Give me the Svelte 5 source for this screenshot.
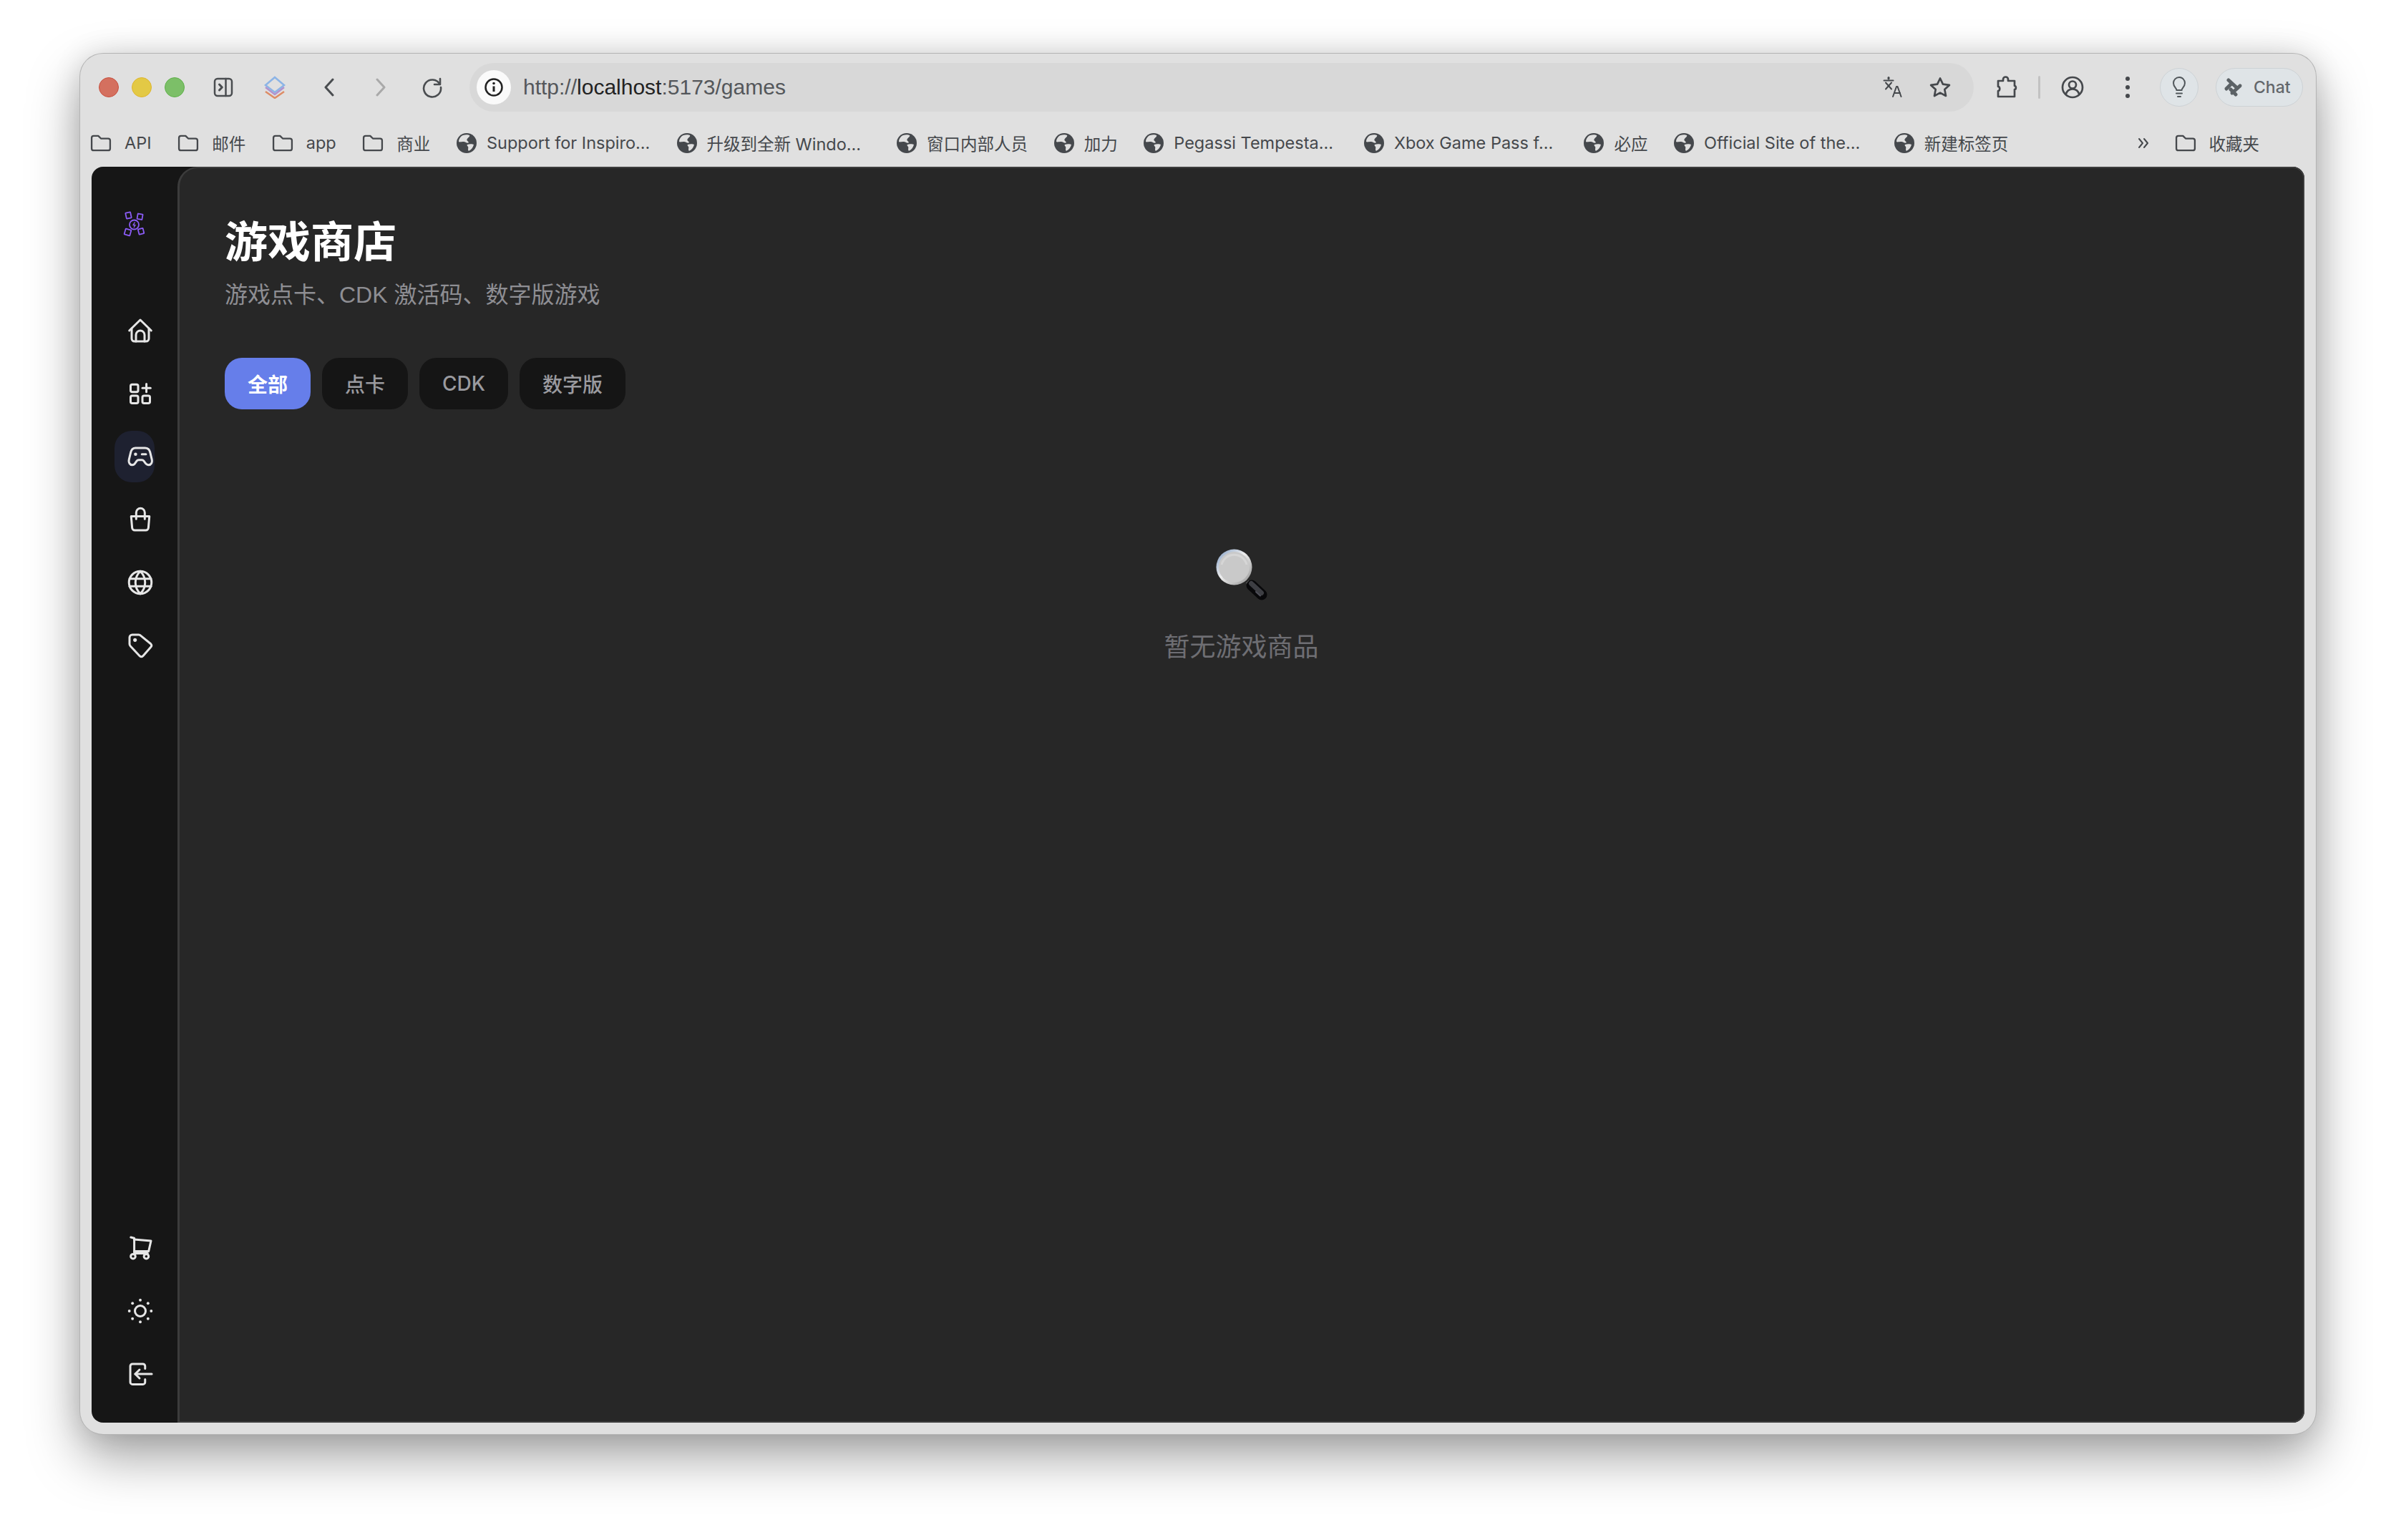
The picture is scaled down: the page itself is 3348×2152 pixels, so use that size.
<script>
  const bookmarks = [
    { label: 'API', icon: 'folder' },
    { label: '邮件', icon: 'folder' },
    { label: 'app', icon: 'folder' },
    { label: '商业', icon: 'folder' },
    { label: 'Support for Inspiro...', icon: 'globe', long: true },
    { label: '升级到全新 Windo...', icon: 'globe', long: true },
    { label: '窗口内部人员', icon: 'globe' },
    { label: '加力', icon: 'globe' },
    { label: 'Pegassi Tempesta...', icon: 'globe', long: true },
    { label: 'Xbox Game Pass f...', icon: 'globe', long: true },
    { label: '必应', icon: 'globe' },
    { label: 'Official Site of the...', icon: 'globe', long: true },
    { label: '新建标签页', icon: 'globe' }
  ];

  const tabs = ['全部', '点卡', 'CDK', '数字版'];

  const navTop = [
    { name: 'home', paths: ['M1.8 12 12 2l10.2 10', 'M4 10v9.5A2.5 2.5 0 0 0 6.500 22h11a2.500 2.500 0 0 0 2.500-2.500V10', 'M8 22v-6a4 4 0 0 1 8 0v6'] },
    { name: 'apps', paths: ['M4.500 3.500h4a1.500 1.500 0 0 1 1.500 1.500v4a1.500 1.500 0 0 1-1.500 1.500h-4A1.500 1.500 0 0 1 3 9V5a1.500 1.500 0 0 1 1.500-1.500Z', 'M4.500 14h4a1.500 1.500 0 0 1 1.500 1.500v4a1.500 1.500 0 0 1-1.500 1.500h-4A1.500 1.500 0 0 1 3 19.500v-4A1.500 1.500 0 0 1 4.500 14Z', 'M15.500 14h4a1.500 1.500 0 0 1 1.500 1.500v4a1.500 1.500 0 0 1-1.500 1.500h-4a1.500 1.500 0 0 1-1.500-1.500v-4a1.500 1.500 0 0 1 1.500-1.500Z', 'M17.700 3v7.500', 'M14 6.800h7.500'] },
    { name: 'games', active: true, paths: ['M7.500 4h9c2.400 0 4 1.400 4.600 3.800l1.700 7c.6 2.900-.9 5-3 5-1.300 0-2.300-.7-3.200-1.900l-1.300-1.800c-.5-.7-1-1-1.800-1h-3c-.8 0-1.300.3-1.800 1l-1.300 1.800C6.800 19.100 5.800 19.800 4.500 19.800c-2.100 0-3.600-2.100-3-5l1.700-7C3.800 5.400 5.100 4 7.500 4Z', 'M13.500 9.800h3.800'] , dots: [[7.600, 9.800, 1.500]] },
    { name: 'bag', paths: ['M3.500 9h17l-.9 10.500a2.500 2.500 0 0 1-2.500 2.500H6.900a2.500 2.500 0 0 1-2.500-2.500Z', 'M8.200 11.500V5.500a4 4 0 0 1 8 0v6'] },
    { name: 'globe', paths: ['M12 1.500a10.500 10.500 0 1 0 0 21 10.500 10.500 0 0 0 0-21Z', 'M12 1.500c-6 6-6 15 0 21', 'M12 1.500c6 6 6 15 0 21', 'M2 8.500h20', 'M2 15.500h20'] },
    { name: 'tag', paths: ['M2 4.500A2.500 2.500 0 0 1 4.500 2h6a3 3 0 0 1 2 .9l9.300 7.600a2.200 2.200 0 0 1 0 3l-7.300 8.300a2.200 2.200 0 0 1-3 0l-8.600-9.100a3 3 0 0 1-.9-2Z'], dots: [[7.100, 6.900, 1.700]] }
  ];

  const sunDots = [0, 45, 90, 135, 180, 225, 270, 315].map((deg) => {
    const r = (deg * Math.PI) / 180;
    return [12 + Math.cos(r) * 10.2, 12 + Math.sin(r) * 10.2, 1.300];
  });

  const navBottom = [
    { name: 'cart', paths: ['M3.200 2 6.400 2.800V17h12.500', 'M6.400 4 22 5.300 19.800 15H6.400', 'M5.300 17.600a2.200 2.200 0 1 0 0 4.400 2.200 2.200 0 0 0 0-4.400Z', 'M17.600 17.600a2.200 2.200 0 1 0 0 4.400 2.200 2.200 0 0 0 0-4.400Z'] },
    { name: 'sun', paths: ['M12 7a5 5 0 1 0 0 10 5 5 0 0 0 0-10Z'], dots: sunDots },
    { name: 'logout', paths: ['M16.500 7V4.700a2 2 0 0 0-2-2H4.700a2 2 0 0 0-2 2v14.900a2 2 0 0 0 2 2h9.800a2 2 0 0 0 2-2V17', 'M22.700 12H7.300', 'M11.300 8l-4 4 4 4'] }
  ];
</script>

{#snippet navIcon(item)}
  <button class="nav-btn" class:active={item.active} aria-label={item.name}>
    <svg width="36" height="36" viewBox="0 0 24 24" fill="none" stroke="#e6e6e6" stroke-width="2" stroke-linecap="round" stroke-linejoin="round">
      {#each item.paths as d}
        <path {d} />
      {/each}
      {#each item.dots ?? [] as c}
        <circle cx={c[0]} cy={c[1]} r={c[2]} fill="#e6e6e6" stroke="none" />
      {/each}
    </svg>
  </button>
{/snippet}

<div class="window">
  <div class="toolbar">
    <div class="lights">
      <span class="light red"></span>
      <span class="light yellow"></span>
      <span class="light green"></span>
    </div>
    <span class="slot panel">
      <svg width="28" height="28" viewBox="0 0 28 28" fill="none" stroke="#4a4d50" stroke-width="2.500" stroke-linejoin="round" stroke-linecap="round">
        <rect x="2" y="2" width="24" height="24" rx="4" />
        <path d="M17.500 2v24" />
        <path d="M8.500 10l3.800 4-3.800 4" stroke-width="3" />
      </svg>
    </span>
    <span class="slot">
      <svg width="32" height="32" viewBox="0 0 32 32" fill="none" stroke-width="2.500">
        <path d="M16 2 29 13 16 23 3 13Z" stroke="#8cb4e6" />
        <path d="M3 18l13 10 13-10" stroke="#b292cd" transform="translate(0 -2)" />
        <path d="M3 22l13 9 13-9" stroke="#dd8c66" />
      </svg>
    </span>
    <span class="slot back">
      <svg width="20" height="26" viewBox="0 0 20 26" fill="none" stroke="#4a4d50" stroke-width="3" stroke-linecap="round" stroke-linejoin="round"><path d="M15 2 5 13l10 11" /></svg>
    </span>
    <span class="slot">
      <svg width="20" height="26" viewBox="0 0 20 26" fill="none" stroke="#a9a9a9" stroke-width="3" stroke-linecap="round" stroke-linejoin="round"><path d="M5 2l10 11L5 24" /></svg>
    </span>
    <span class="slot">
      <svg width="30" height="30" viewBox="0 0 30 30" fill="none" stroke="#4a4d50" stroke-width="2.600" stroke-linecap="round" stroke-linejoin="round">
        <path d="M25.500 10.500A12 12 0 1 0 27 15" />
        <path d="M26 3v8h-8" />
      </svg>
    </span>

    <div class="address">
      <span class="info">
        <svg width="28" height="28" viewBox="0 0 28 28" fill="none" stroke="#222" stroke-width="2.500">
          <circle cx="14" cy="14" r="11.500" />
          <path d="M14 12.500v7.500" stroke-width="3" />
          <circle cx="14" cy="8.500" r="1.800" fill="#222" stroke="none" />
        </svg>
      </span>
      <span class="url">http://<b>localhost</b>:5173/games</span>
      <span class="addr-slot first">
        <svg width="30" height="30" viewBox="0 0 30 30" fill="none" stroke="#45484c" stroke-width="2" stroke-linecap="round" stroke-linejoin="round">
          <path d="M9 1.500v1.500" stroke-width="3" />
          <path d="M2.500 5.500h13" />
          <path d="M5 8.500l8 9" />
          <path d="M13 8.500l-8 9" />
          <path d="M15 28l5-14h1.500l5 14" />
          <path d="M17 23h8" />
        </svg>
      </span>
      <span class="addr-slot">
        <svg width="32" height="32" viewBox="0 0 32 32" fill="none" stroke="#45484c" stroke-width="2.700" stroke-linejoin="round"><path d="M16 3.500l3.900 8.200 9 1.200-6.600 6.200 1.700 8.900-8-4.400-8 4.400 1.700-8.900-6.600-6.200 9-1.200Z" /></svg>
      </span>
    </div>

    <span class="tool ext">
      <svg width="30" height="32" viewBox="0 0 30 32" fill="none" stroke="#45484c" stroke-width="2.700" stroke-linejoin="round">
        <path d="M3 7h7V5a3.500 3.500 0 0 1 7 0v2h9v7c2.500 0 2.500 5 0 5v10H3v-8c3 0 3-6 0-6Z" />
      </svg>
    </span>
    <span class="sep"></span>
    <span class="tool profile">
      <svg width="32" height="32" viewBox="0 0 32 32" fill="none" stroke="#45484c" stroke-width="2.700">
        <circle cx="16" cy="16" r="14" />
        <circle cx="16" cy="12.500" r="5" />
        <path d="M6.500 26c1.500-5 5-7.500 9.500-7.500s8 2.500 9.500 7.500" />
      </svg>
    </span>
    <span class="tool dots">
      <i></i><i></i><i></i>
    </span>
    <span class="pill bulb">
      <svg width="24" height="32" viewBox="0 0 24 32" fill="none" stroke="#50565a" stroke-width="2" stroke-linecap="round">
        <path d="M8.500 20c0-3-4.500-4.500-4.500-10a8 8 0 0 1 16 0c0 5.500-4.500 7-4.500 10Z" />
        <path d="M8 24.500h8" />
        <path d="M10 29h4" />
      </svg>
    </span>
    <span class="pill chat">
      <svg width="28" height="26" viewBox="0 0 28 26" fill="none" stroke="#5c6266" stroke-width="5" stroke-linecap="round">
        <path d="M7 3l12 11" />
        <path d="M23 11 12 21" />
        <path d="M4 15l6-6" />
        <path d="M10 16l7 7" />
      </svg>
      <span>Chat</span>
    </span>
  </div>

  <div class="bookmarks">
    {#each bookmarks as b}
      <span class="bm {b.icon}" class:long={b.long}>
        {#if b.icon === 'folder'}
          <svg width="30" height="24" viewBox="0 0 32 26" fill="none" stroke="#45484c" stroke-width="2.500" stroke-linejoin="round"><path d="M2 5a3 3 0 0 1 3-3h7l4 4h11a3 3 0 0 1 3 3v12a3 3 0 0 1-3 3H5a3 3 0 0 1-3-3Z" /></svg>
        {:else}
          <svg width="28" height="28" viewBox="0 0 28 28">
            <circle cx="14" cy="14" r="14" fill="#45484c" />
            <path d="M9 3c3-1 7-1 9 0 1 2-2 3-3 5-2 2 1 3 2 5-2 2-5-1-7-1-3 0-6 1-7 0 0-4 3-8 6-9Z" fill="#e0e0e0" />
            <path d="M15 16c3-1 7-1 9 0-1 4-3 7-7 9-2-2 0-4-1-6-1-1-2-2-1-3Z" fill="#e0e0e0" />
          </svg>
        {/if}
        <span class="bm-label">{b.label}</span>
      </span>
    {/each}
    <span class="more">
      <svg width="16" height="16" viewBox="0 0 16 16" fill="none" stroke="#45484c" stroke-width="2" stroke-linecap="round" stroke-linejoin="round"><path d="M2 2l5 6-5 6" /><path d="M9 2l5 6-5 6" /></svg>
    </span>
    <span class="bm folder favorites">
      <svg width="30" height="24" viewBox="0 0 32 26" fill="none" stroke="#45484c" stroke-width="2.500" stroke-linejoin="round"><path d="M2 5a3 3 0 0 1 3-3h7l4 4h11a3 3 0 0 1 3 3v12a3 3 0 0 1-3 3H5a3 3 0 0 1-3-3Z" /></svg>
      <span class="bm-label">收藏夹</span>
    </span>
  </div>

  <div class="app">
    <aside class="sidebar">
      <svg class="logo" width="32" height="36" viewBox="0 0 32 36" fill="none" stroke="#8b5cf6" stroke-width="1.800" stroke-linejoin="round">
        <rect x="4" y="2" width="7" height="8" rx="0.500" transform="rotate(-12 7.500 6)" />
        <rect x="20" y="4" width="7" height="7.500" rx="0.500" transform="rotate(10 23.500 8)" />
        <rect x="2.500" y="25.500" width="8" height="8" rx="0.500" transform="rotate(16 6.500 29.500)" />
        <rect x="21.500" y="24.500" width="7" height="7.500" rx="0.500" transform="rotate(-14 25 28)" />
        <circle cx="15.500" cy="19" r="6.500" />
        <path d="M16.500 15.500l-2.500 4h3l-2 3.500" stroke-width="1.400" />
      </svg>
      <nav class="nav">
        {#each navTop as item}
          {@render navIcon(item)}
        {/each}
      </nav>
      <nav class="nav bottom">
        {#each navBottom as item}
          {@render navIcon(item)}
        {/each}
      </nav>
    </aside>

    <main class="main">
      <h1>游戏商店</h1>
      <p class="sub">游戏点卡、CDK 激活码、数字版游戏</p>
      <div class="tabs">
        {#each tabs as t, i}
          <button class="tab" class:on={i === 0}>{t}</button>
        {/each}
      </div>
      <div class="empty">
        <svg width="72" height="72" viewBox="0 0 72 72" fill="none">
          <defs>
            <linearGradient id="rim" x1="0" y1="0" x2="1" y2="1">
              <stop offset="0" stop-color="#7f9cc4" />
              <stop offset="0.450" stop-color="#eeeeee" />
              <stop offset="1" stop-color="#8f8f8f" />
            </linearGradient>
          </defs>
          <path d="M44 46l3 3" stroke="#8a8a8a" stroke-width="5" />
          <path d="M50 51l14 13" stroke="#08080a" stroke-width="15" stroke-linecap="round" />
          <path d="M49.500 48.500l14 13" stroke="#3d3e43" stroke-width="7" stroke-linecap="round" />
          <path d="M56 60l6 5.500" stroke="#50515a" stroke-width="2" stroke-linecap="round" />
          <circle cx="25.500" cy="25.500" r="25" fill="url(#rim)" />
          <circle cx="25.500" cy="25.500" r="21.500" fill="#c9c9c9" />
          <path d="M8 22a18 18 0 0 1 35 0" stroke="#d6d6d6" stroke-width="3" />
        </svg>
        <p>暂无游戏商品</p>
      </div>
    </main>
  </div>
</div>

<style>
  :global(body) {
    margin: 0;
    background: #fff;
  }

  .window {
    box-sizing: border-box;
    width: 3124px;
    height: 1929px;
    margin: 75px 0 148px 112px;
    display: flex;
    flex-direction: column;
    background: #e0e0e0;
    border-radius: 32px;
    box-shadow: 0 0 0 1px #b4b4b4, 0 32px 72px rgba(0, 0, 0, 0.36), 0 0 40px rgba(0, 0, 0, 0.12);
    font-family: "Liberation Sans", "Noto Sans CJK SC", sans-serif;
    color: #45484c;
  }

  .toolbar {
    flex: none;
    height: 94px;
    display: flex;
    align-items: center;
    padding: 0 18px 0 26px;
  }

  .lights {
    display: flex;
    gap: 18px;
    margin-right: 18px;
  }

  .light {
    box-sizing: border-box;
    width: 28px;
    height: 28px;
    border-radius: 50%;
    border: 1px solid;
  }

  .red { background: #d4705f; border-color: #c9503f; }
  .yellow { background: #e3c945; border-color: #dfb52d; }
  .green { background: #7cbf68; border-color: #5fb04a; }

  .slot {
    flex: none;
    width: 72px;
    display: flex;
    justify-content: center;
  }

  .back {
    margin-left: 4px;
  }

  .address {
    flex: 1;
    height: 68px;
    margin-left: 16px;
    display: flex;
    align-items: center;
    background: #d8d8d8;
    border-radius: 34px;
  }

  .info {
    width: 48px;
    height: 48px;
    margin-left: 10px;
    border-radius: 50%;
    background: #fafafa;
    display: flex;
    align-items: center;
    justify-content: center;
  }

  .url {
    margin-left: 17px;
    font-size: 30px;
    color: #54575b;
  }

  .url b {
    font-weight: 400;
    color: #222;
  }

  .addr-slot {
    width: 66px;
    display: flex;
    justify-content: center;
  }

  .addr-slot.first {
    margin-left: auto;
  }

  .addr-slot:last-child {
    margin-right: 14px;
  }

  .tool {
    flex: none;
    width: 60px;
    display: flex;
    justify-content: center;
  }

  .ext { margin-left: 16px; }
  .profile { margin-left: 15px; }

  .sep {
    flex: none;
    width: 3px;
    height: 32px;
    margin-left: 14px;
    background: #c2c2c2;
    border-radius: 2px;
  }

  .dots {
    margin-left: 17px;
    flex-direction: column;
    align-items: center;
    gap: 6px;
  }

  .dots i {
    width: 6px;
    height: 6px;
    border-radius: 50%;
    background: #45484c;
  }

  .pill {
    flex: none;
    box-sizing: border-box;
    height: 54px;
    border-radius: 27px;
    background: #dfe4e7;
    border: 1px solid #cdd2d5;
    display: flex;
    align-items: center;
  }

  .bulb {
    width: 54px;
    margin-left: 15px;
    justify-content: center;
  }

  .chat {
    width: 122px;
    margin-left: 24px;
    padding-left: 10px;
    gap: 14px;
    font: 500 23px Inter, sans-serif;
    color: #63676b;
  }

  .bookmarks {
    flex: none;
    height: 64px;
    display: flex;
    align-items: center;
    padding: 0 0 3px 14px;
    box-sizing: border-box;
    gap: 36.6px;
    font-family: Inter, "Noto Sans CJK SC", sans-serif;
    font-size: 23.5px;
    color: #45484c;
  }

  .bm {
    display: flex;
    align-items: center;
    white-space: nowrap;
  }

  .bm.folder { gap: 18px; }
  .bm.globe { gap: 14px; }

  .bm.long .bm-label {
    width: 229px;
  }

  .more {
    margin-left: auto;
    display: flex;
    margin-right: -1px;
  }

  .favorites {
    margin-right: 79px;
  }

  .app {
    flex: 1;
    min-height: 0;
    display: flex;
    margin: 0 16px 16px 16px;
    background: #161616;
    border-radius: 16px;
  }

  .sidebar {
    flex: none;
    width: 120px;
    box-sizing: border-box;
    padding: 62px 0 32px;
    display: flex;
    flex-direction: column;
    align-items: center;
  }

  .logo {
    flex: none;
    margin-bottom: 95px;
  }

  .nav {
    display: flex;
    flex-direction: column;
    gap: 16px;
  }

  .nav.bottom {
    margin-top: auto;
  }

  .nav-btn {
    box-sizing: border-box;
    width: 56px;
    height: 72px;
    padding: 0 0 0 18px;
    background: none;
    border: 0;
    border-radius: 24px;
    display: flex;
    align-items: center;
    overflow: visible;
  }

  .nav-btn svg {
    flex: none;
  }

  .nav-btn.active {
    background: #1e2130;
  }

  .main {
    flex: 1;
    min-width: 0;
    box-sizing: border-box;
    background: #272727;
    border: solid #3c3c3c;
    border-width: 2px 2px 2px 3px;
    border-radius: 28px 16px 16px 0;
    padding: 63px 63px 0;
    display: flex;
    flex-direction: column;
  }

  h1 {
    margin: 0;
    font-size: 60px;
    line-height: 84px;
    font-weight: 700;
    color: #fff;
  }

  .sub {
    margin: 6px 0 0;
    font-size: 32px;
    line-height: 48px;
    color: #8e8e93;
  }

  .tabs {
    display: flex;
    gap: 16px;
    margin-top: 64px;
  }

  .tab {
    height: 72px;
    padding: 0 32px;
    border: 0;
    border-radius: 24px;
    background: #151515;
    color: #9a9a9f;
    font: 500 28px Inter, "Noto Sans CJK SC", sans-serif;
  }

  .tab.on {
    background: #667eea;
    color: #fff;
    font-weight: 700;
  }

  .empty {
    margin-top: 195px;
    display: flex;
    flex-direction: column;
    align-items: center;
  }

  .empty svg {
    display: block;
  }

  .empty p {
    margin: 39px 0 0;
    font-size: 36px;
    line-height: 54px;
    color: #6e6e73;
  }
</style>
